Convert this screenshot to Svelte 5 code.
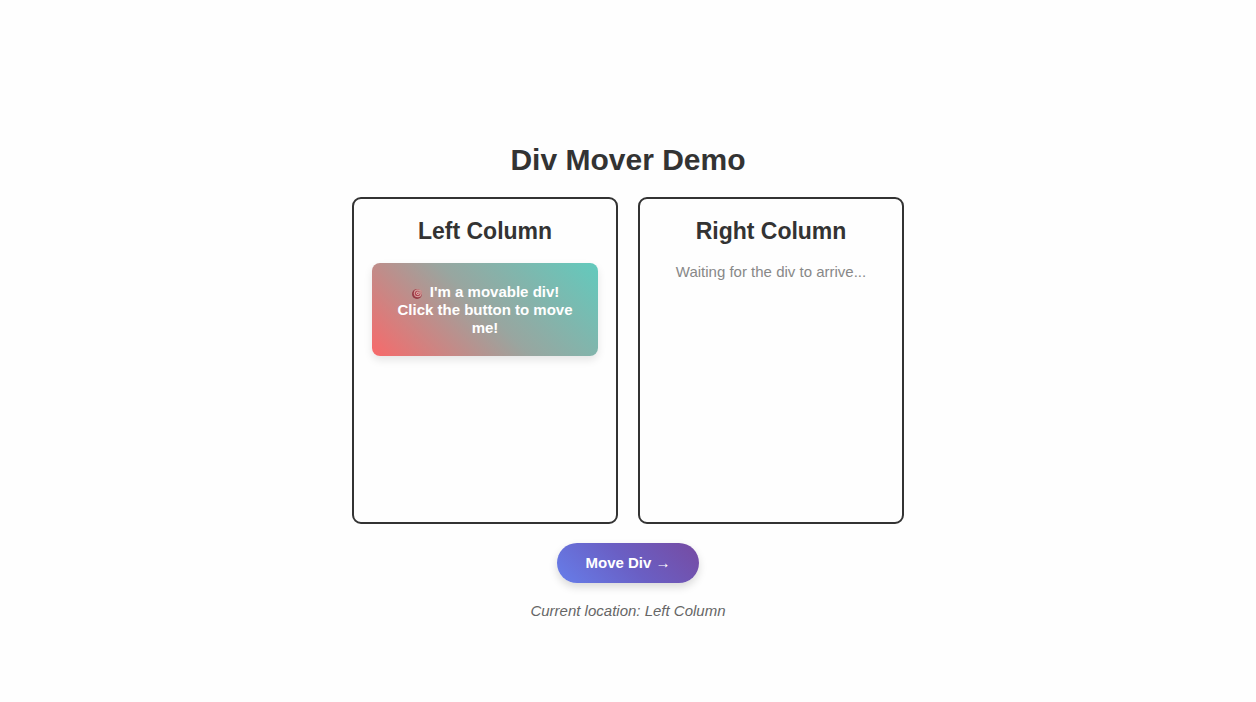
<script lang="ts">
  type Side = 'left' | 'right';

  let location: Side = $state('left');

  const columns: { side: Side; title: string }[] = [
    { side: 'left', title: 'Left Column' },
    { side: 'right', title: 'Right Column' }
  ];

  let current = $derived(location === 'left' ? 'Left Column' : 'Right Column');

  function moveDiv() {
    location = location === 'left' ? 'right' : 'left';
  }
</script>

<main class="demo">
  <h1>Div Mover Demo</h1>

  <div class="columns">
    {#each columns as column (column.side)}
      <section class="column">
        <h2>{column.title}</h2>
        {#if location === column.side}
          <div class="movable">
            <svg class="target" viewBox="0 0 12 12" aria-hidden="true">
              <circle cx="6" cy="6" r="5" fill="#963a45" />
              <circle cx="6.8" cy="5.2" r="4" fill="#d39a98" />
              <circle cx="6.6" cy="5.4" r="2.7" fill="#b04450" />
              <circle cx="6.9" cy="5.2" r="1.7" fill="#e6bab6" />
              <circle cx="6.8" cy="5.4" r="0.7" fill="#a03040" />
              <path d="M7 5.4 11 3" stroke="#c48d8b" stroke-width="1.8" />
            </svg>
            I'm a movable div!<br />
            Click the button to move me!
          </div>
        {:else}
          <p class="waiting">Waiting for the div to arrive...</p>
        {/if}
      </section>
    {/each}
  </div>

  <button class="move-btn" onclick={moveDiv}>
    Move Div <span class="arrow">{location === 'left' ? '→' : '←'}</span>
  </button>

  <p class="status">Current location: {current}</p>
</main>

<style>
  :global(body) {
    background: #fefefe;
  }

  .demo {
    display: flex;
    flex-direction: column;
    align-items: center;
    max-width: 552px;
    margin: 0 auto;
    padding: 142px 20px 20px;
    font-family: Arial, "Liberation Sans", sans-serif;
    font-size: 15px;
    line-height: 18px;
    color: #333;
    text-align: center;
  }

  h1 {
    margin: 0 0 19px;
    font-size: 30px;
    line-height: 36px;
  }

  .columns {
    display: flex;
    gap: 20px;
    width: 100%;
    margin-bottom: 19px;
  }

  .column {
    flex: 1;
    box-sizing: border-box;
    min-height: 327px;
    padding: 19px 18px;
    border: 2px solid #333;
    border-radius: 9px;
  }

  h2 {
    margin: 0 0 18px;
    font-size: 23px;
    line-height: 27px;
  }

  .movable {
    padding: 20px 19px 19px;
    border-radius: 8px;
    background: linear-gradient(45deg, #f8696a, #98a6a0 50%, #62cabd);
    box-shadow: 0 4px 8px rgba(0, 0, 0, 0.1);
    color: white;
    font-weight: bold;
  }

  .target {
    width: 12px;
    height: 12px;
    margin-right: 3px;
    vertical-align: -3px;
  }

  .waiting {
    margin: 0;
    color: #888;
  }

  .move-btn {
    height: 40px;
    padding: 0 28px;
    border: none;
    border-radius: 20px;
    background: linear-gradient(45deg, #667eea, #6a5fc4 50%, #764ba2);
    box-shadow: 0 4px 8px rgba(0, 0, 0, 0.15);
    color: white;
    font: inherit;
    font-weight: bold;
    cursor: pointer;
  }

  .arrow {
    font-family: "Liberation Serif", serif;
    font-weight: normal;
  }

  .status {
    margin: 19px 0 0;
    color: #666;
    font-style: italic;
  }
</style>
